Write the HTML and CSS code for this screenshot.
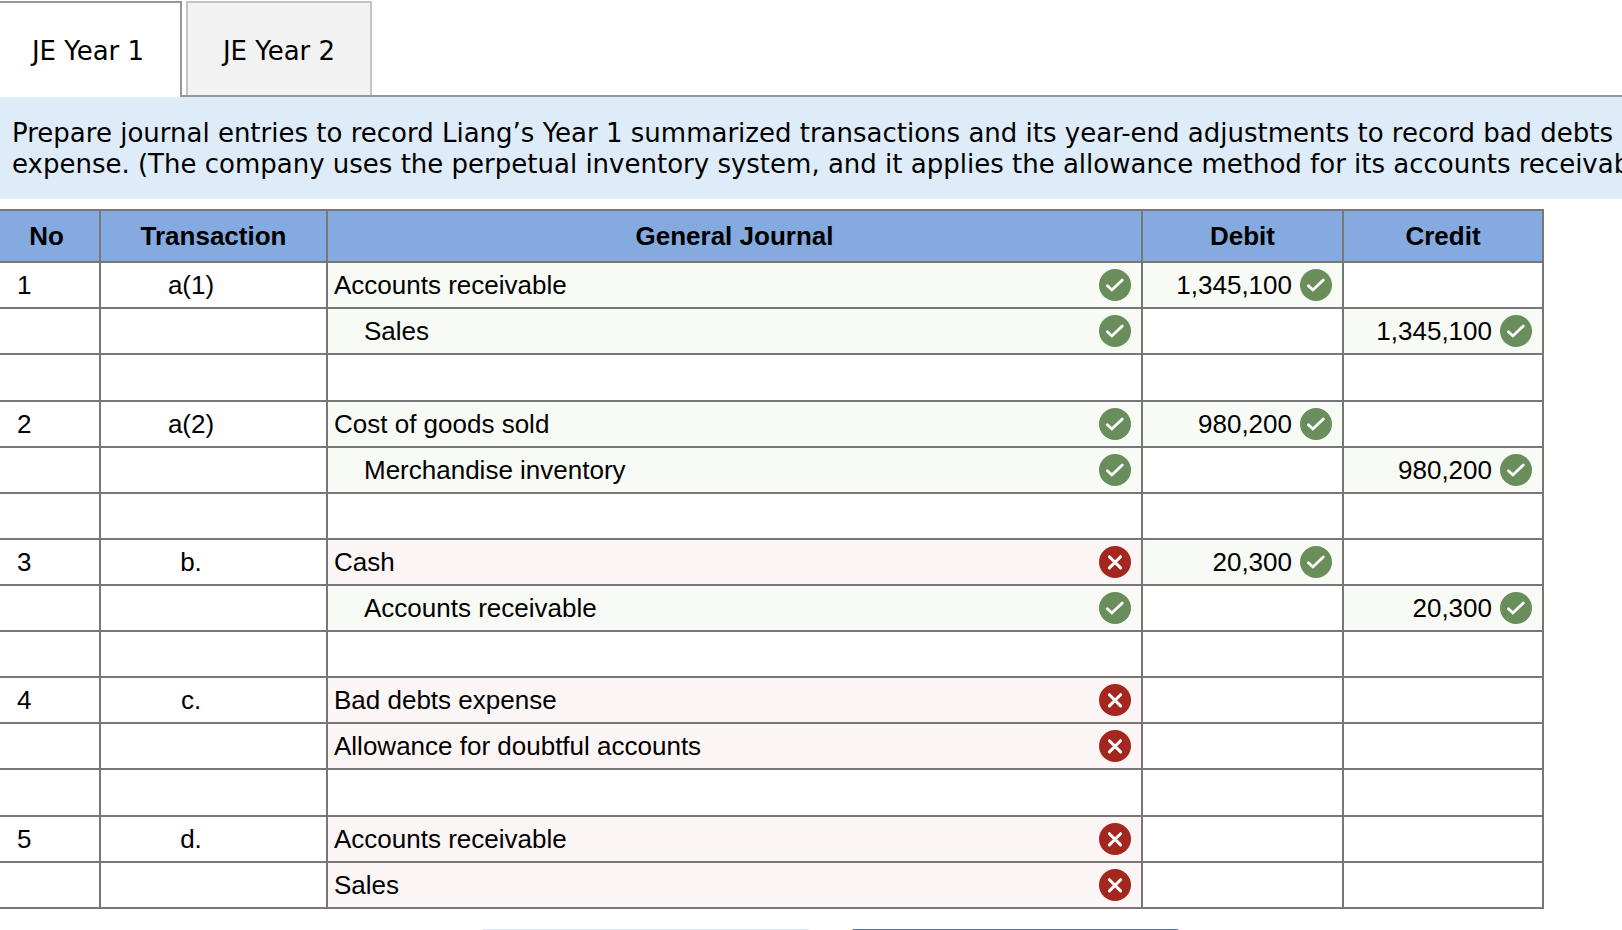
FILE: index.html
```html
<!DOCTYPE html>
<html lang="en">
<head>
<meta charset="utf-8">
<title>JE Year 1</title>
<link rel="stylesheet" href="styles.css">
</head>
<body>
<svg class="sprite" aria-hidden="true">
  <symbol id="right" viewBox="0 0 32 32">
    <circle cx="16" cy="16" r="16" fill="#698e5b"/>
    <path d="M8.400 16.700l4.500 4.200L23.300 10.900" fill="none" stroke="#fff" stroke-width="2.800" stroke-linecap="round"/>
  </symbol>
  <symbol id="wrong" viewBox="0 0 32 32">
    <circle cx="16" cy="16" r="16" fill="#a3271f"/>
    <path d="M10.400 10.700l11.200 11.200M21.600 10.700L10.400 21.900" fill="none" stroke="#fff" stroke-width="3" stroke-linecap="round"/>
  </symbol>
</svg>
<nav class="tabs" role="tablist">
  <button class="tab tab-active" role="tab" aria-selected="true">JE Year 1</button>
  <button class="tab" role="tab" aria-selected="false">JE Year 2</button>
</nav>
<p class="instructions">Prepare journal entries to record Liang’s Year 1 summarized transactions and its year-end adjustments to record bad debts<br>expense. (The company uses the perpetual inventory system, and it applies the allowance method for its accounts receivable.)</p>
<main class="sheet">
<table class="journal">
  <colgroup><col class="col-no"><col class="col-trans"><col><col class="col-debit"><col class="col-credit"></colgroup>
  <thead>
    <tr><th>No</th><th>Transaction</th><th>General Journal</th><th>Debit</th><th>Credit</th></tr>
  </thead>
  <tbody>
    <tr><td class="no">1</td><td class="trans">a(1)</td><td class="ok"><div class="entry">Accounts receivable<svg class="mark"><use href="#right"/></svg></div></td><td class="ok"><div class="amount">1,345,100<svg class="mark"><use href="#right"/></svg></div></td><td></td></tr>
    <tr><td></td><td></td><td class="ok"><div class="entry indent">Sales<svg class="mark"><use href="#right"/></svg></div></td><td></td><td class="ok"><div class="amount">1,345,100<svg class="mark"><use href="#right"/></svg></div></td></tr>
    <tr class="gap"><td></td><td></td><td></td><td></td><td></td></tr>
    <tr><td class="no">2</td><td class="trans">a(2)</td><td class="ok"><div class="entry">Cost of goods sold<svg class="mark"><use href="#right"/></svg></div></td><td class="ok"><div class="amount">980,200<svg class="mark"><use href="#right"/></svg></div></td><td></td></tr>
    <tr><td></td><td></td><td class="ok"><div class="entry indent">Merchandise inventory<svg class="mark"><use href="#right"/></svg></div></td><td></td><td class="ok"><div class="amount">980,200<svg class="mark"><use href="#right"/></svg></div></td></tr>
    <tr><td></td><td></td><td></td><td></td><td></td></tr>
    <tr><td class="no">3</td><td class="trans">b.</td><td class="bad"><div class="entry">Cash<svg class="mark"><use href="#wrong"/></svg></div></td><td class="ok"><div class="amount">20,300<svg class="mark"><use href="#right"/></svg></div></td><td></td></tr>
    <tr><td></td><td></td><td class="ok"><div class="entry indent">Accounts receivable<svg class="mark"><use href="#right"/></svg></div></td><td></td><td class="ok"><div class="amount">20,300<svg class="mark"><use href="#right"/></svg></div></td></tr>
    <tr><td></td><td></td><td></td><td></td><td></td></tr>
    <tr><td class="no">4</td><td class="trans">c.</td><td class="bad"><div class="entry">Bad debts expense<svg class="mark"><use href="#wrong"/></svg></div></td><td></td><td></td></tr>
    <tr><td></td><td></td><td class="bad"><div class="entry">Allowance for doubtful accounts<svg class="mark"><use href="#wrong"/></svg></div></td><td></td><td></td></tr>
    <tr class="gap"><td></td><td></td><td></td><td></td><td></td></tr>
    <tr><td class="no">5</td><td class="trans">d.</td><td class="bad"><div class="entry">Accounts receivable<svg class="mark"><use href="#wrong"/></svg></div></td><td></td><td></td></tr>
    <tr><td></td><td></td><td class="bad"><div class="entry">Sales<svg class="mark"><use href="#wrong"/></svg></div></td><td></td><td></td></tr>
  </tbody>
</table>
<div class="pager">
  <button class="page-button"></button>
  <button class="page-button page-next"></button>
</div>
</main>
</body>
</html>
```
FILE: styles.css
```css
* { box-sizing: border-box; }

body {
  margin: 0;
  height: 100vh;
  overflow: hidden;
  background: #fff;
  color: #000;
  font-family: "Liberation Sans", Arial, sans-serif;
  font-size: 26px;
}

.sprite {
  position: absolute;
  width: 0;
  height: 0;
}

.tabs {
  display: flex;
  gap: 4px;
  padding-top: 1px;
  height: 97px;
  border-bottom: 2px solid #969696;
}

.tab {
  width: 186px;
  margin: 0;
  padding: 4px 0 0;
  border: 2px solid #c4c4c4;
  border-bottom: 0;
  background: #f2f2f2;
  color: #000;
  font: 26px Verdana, "DejaVu Sans", sans-serif;
}

.tab-active {
  width: 182px;
  margin-bottom: -2px;
  padding: 2px 4px 0 0;
  border-color: #969696;
  border-left: 0;
  background: #fff;
}

.instructions {
  margin: 0;
  padding: 21px 12px 19px;
  background: #deebf8;
  font: 26px/31px Verdana, "DejaVu Sans", sans-serif;
  white-space: nowrap;
}

.sheet {
  margin: 10px 78px 0 -8px;
}

.journal {
  width: 100%;
  table-layout: fixed;
  border-collapse: collapse;
}

.col-no { width: 107px; }
.col-trans { width: 227px; }
.col-debit { width: 201px; }
.col-credit { width: 200px; }

.journal th,
.journal td {
  height: 46px;
  padding: 0;
  border: 2px solid #777;
  line-height: 30px;
}

.journal th {
  height: 52px;
  background: #84aadf;
}

.journal .gap td { height: 47px; }
.journal .no { padding-left: 23px; }

.journal .trans {
  padding-right: 45px;
  text-align: center;
}

.journal .ok { background: #f8faf5; }
.journal .bad { background: #fbf5f5; }

.entry,
.amount {
  display: flex;
  align-items: center;
}

.entry {
  justify-content: space-between;
  padding: 0 10px 0 6px;
}

.indent { padding-left: 36px; }

.amount {
  justify-content: flex-end;
  gap: 8px;
  padding-right: 10px;
}

.mark {
  width: 32px;
  height: 32px;
}

.pager {
  display: flex;
  gap: 43px;
  margin: 20px 0 0 490px;
}

.page-button {
  width: 327px;
  height: 60px;
  border: 0;
  border-radius: 2px;
  background: #d9e4ee;
}

.page-next { background: #4e76b3; }
```
